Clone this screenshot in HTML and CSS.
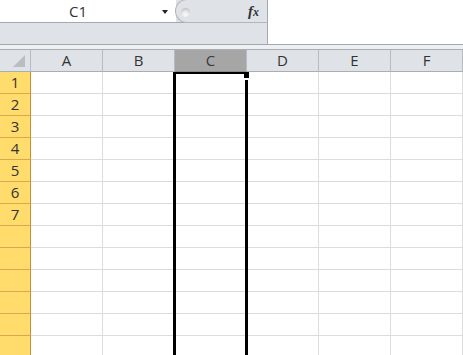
FILE: index.html
```html
<!DOCTYPE html>
<html lang="en">
<head>
    <meta charset="UTF-8">
    <title>Sheet - C1</title>
    <link rel="stylesheet" href="styles.css">
</head>
<body>
    <div class="toolbar">
        <div class="toolbar-left">
            <div class="toolbar-top">
                <div class="namebox">
                    <span class="namebox-text">C1</span>
                    <span class="namebox-arrow"></span>
                </div>
                <div class="fxbox">
                    <span class="fx-knob"></span>
                    <span class="fx-label">f<small>x</small></span>
                </div>
            </div>
            <div class="toolbar-bottom"></div>
        </div>
        <div class="formula"></div>
    </div>
    <div class="gap"></div>

    <div class="sheet">
        <div class="row head">
            <div class="cell corner">
                <svg width="12" height="12" viewBox="0 0 12 12"><polygon points="12,0 12,12 0,12" fill="#b9bec4"/></svg>
            </div>
            <div class="cell col">A</div>
            <div class="cell col">B</div>
            <div class="cell col selected">C</div>
            <div class="cell col">D</div>
            <div class="cell col">E</div>
            <div class="cell col">F</div>
        </div>
        <div class="body" id="body">
            <div class="selection"></div>
            <div class="fill-handle"></div>
        </div>
    </div>

    <script>
        // rows: only the first seven carry numbers
        const body = document.getElementById('body');
        for (let r = 1; r <= 13; r++) {
            const row = document.createElement('div');
            row.className = 'row';
            let html = `<div class="cell rowhead">${r <= 7 ? r : ''}</div>`;
            for (let c = 0; c < 6; c++) html += '<div class="cell"></div>';
            row.innerHTML = html;
            body.appendChild(row);
        }
    </script>
</body>
</html>
```

FILE: styles.css
```css
html, body {
    margin: 0;
    height: 355px;
    overflow: hidden;
}
body {
    background: #fff;
    font-family: "Open Sans", "Liberation Sans", sans-serif;
    color: #333;
}
* {
    box-sizing: border-box;
}

/* formula bar */
.toolbar {
    display: flex;
    height: 45px;
    border-bottom: 1px solid #a4a9b0;
}
.toolbar-left {
    width: 268px;
    display: flex;
    flex-direction: column;
    border-right: 1px solid #a4a9b0;
    background: #dfe2e7;
}
.toolbar-top {
    display: flex;
    height: 23px;
    border-bottom: 1px solid #a4a9b0;
}
.namebox {
    width: 176px;
    background: #fff;
    display: flex;
    align-items: center;
}
.namebox-text {
    width: 156px;
    text-align: center;
    font-size: 15px;
    line-height: 22px;
}
.namebox-arrow {
    margin-left: 6px;
    margin-top: 2px;
    border-left: 3px solid transparent;
    border-right: 3px solid transparent;
    border-top: 4px solid #222;
}
.fxbox {
    flex: 1;
    display: flex;
    align-items: center;
    justify-content: space-between;
    background: #dfe2e7;
    border-radius: 12px 0 0 12px;
    border: 1px solid #b3b7bd;
    border-right: none;
    margin: -1px 0 -1px -1px;
    padding: 0 8px 0 5px;
}
.fx-knob {
    width: 9px;
    height: 9px;
    margin-top: 2px;
    border-radius: 50%;
    background: radial-gradient(circle at 50% 75%, #fdfdfd 0, #e9e9e9 40%, #aeb1b5 100%);
}
.fx-label {
    font-family: "Liberation Serif", serif;
    font-style: italic;
    font-weight: bold;
    font-size: 15px;
    color: #333;
}
.fx-label small {
    font-size: 12px;
}
.toolbar-bottom {
    flex: 1;
}
.formula {
    flex: 1;
    background: #fff;
}
.gap {
    height: 4px;
    background: #eef0f2;
}

/* grid */
.sheet {
    border-top: 1px solid #a9aeb5;
}
.row {
    display: grid;
    grid-template-columns: 31px repeat(6, 72px);
    height: 22px;
}
.cell {
    border-right: 1px solid #dadcdd;
    border-bottom: 1px solid #dadcdd;
}
.head .cell {
    background: #dfe3e8;
    border-right-color: #b6bbc1;
    border-bottom-color: #a9aeb5;
    text-align: center;
    font-size: 15px;
    line-height: 21px;
}
.head .corner {
    display: flex;
    justify-content: flex-end;
    align-items: flex-end;
    padding: 0 5px 4px 0;
}
.head .selected {
    background: #a6a6a6;
    border-bottom-color: #8a8a8a;
    color: #3a3a3a;
}
.body {
    position: relative;
}
.rowhead {
    background: #ffdc6b;
    border-right-color: #c98c2e;
    border-bottom-color: #dba84e;
    text-align: center;
    font-size: 15px;
    line-height: 21px;
}
.selection {
    position: absolute;
    left: 173px;
    top: 0;
    width: 75px;
    height: 283px;
    border-top: 2px solid #000;
    border-left: 3px solid #000;
    border-right: 3px solid #000;
    z-index: 2;
}
.fill-handle {
    position: absolute;
    left: 244px;
    top: 0;
    width: 5px;
    height: 8px;
    background: #000;
    border-bottom: 2px solid #fff;
    z-index: 3;
}
```
